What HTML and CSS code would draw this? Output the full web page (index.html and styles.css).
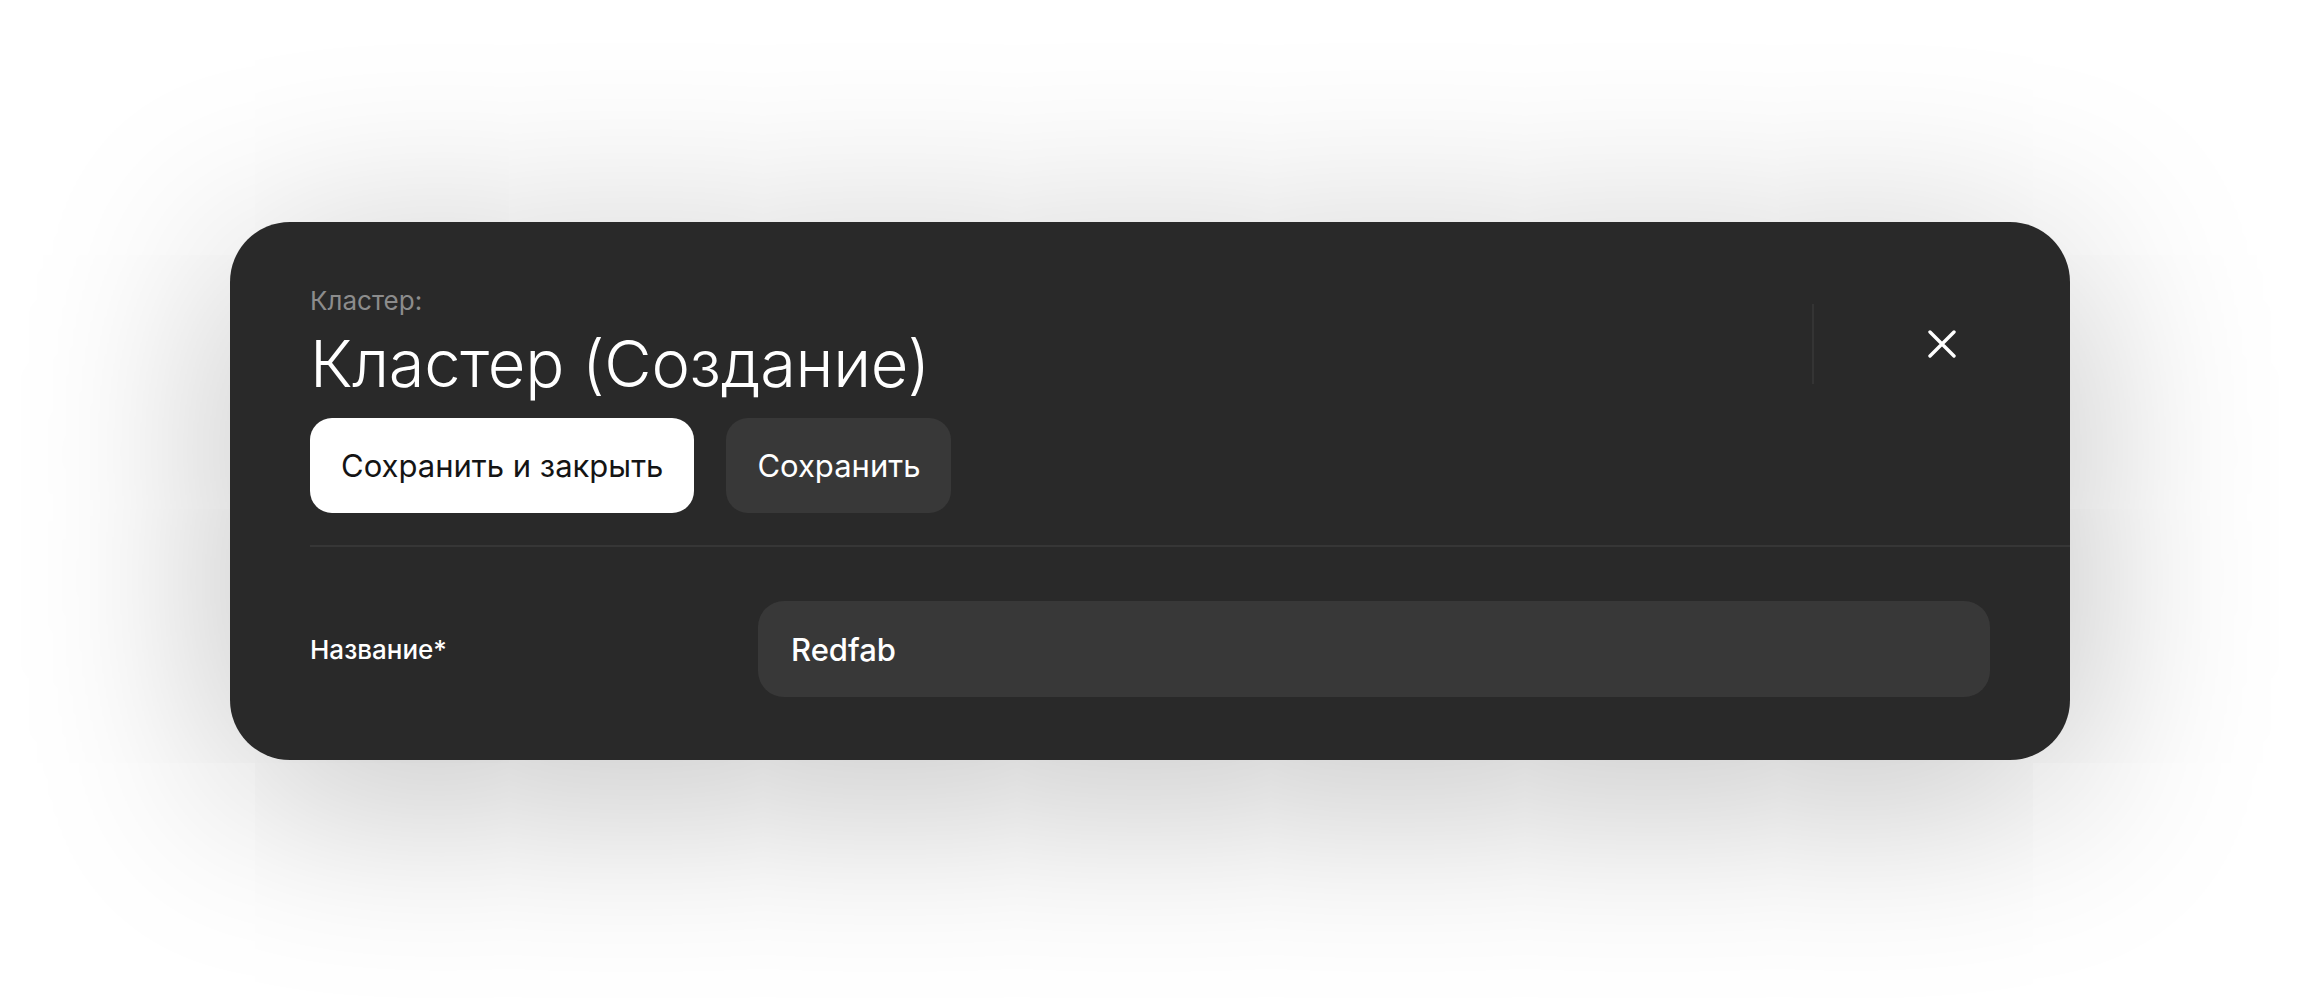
FILE: index.html
```html
<!DOCTYPE html>
<html lang="ru">
<head>
<meta charset="utf-8">
<title>Кластер (Создание)</title>
<link rel="stylesheet" href="styles.css">
</head>
<body>
<div class="page">
  <div class="card">
    <div class="header">
      <div class="header-main">
        <div class="eyebrow">Кластер:</div>
        <h1 class="title">Кластер (Создание)</h1>
        <div class="actions">
          <button class="btn btn-primary">Сохранить и закрыть</button>
          <button class="btn btn-secondary">Сохранить</button>
        </div>
      </div>
      <div class="close-area">
        <button class="close" aria-label="Закрыть">
          <svg width="28" height="28" viewBox="0 0 28 28"><path d="M2 2L26 26M26 2L2 26" stroke="#fff" stroke-width="3.4" stroke-linecap="round" fill="none"/></svg>
        </button>
      </div>
    </div>
    <div class="row">
      <label class="field-label">Название*</label>
      <div class="input">Redfab</div>
    </div>
  </div>
</div>
</body>
</html>
```

FILE: styles.css
```css
* { box-sizing: border-box; }
html, body { margin: 0; padding: 0; background: #ffffff; }
body { font-family: Inter, "Noto Sans", sans-serif; }
.page {
  width: 2300px;
  height: 998px;
  padding-top: 222px;
  display: flex;
  justify-content: center;
  align-items: flex-start;
}
.card {
  width: 1840px;
  background: #292929;
  border-radius: 60px;
  box-shadow: 0 30px 200px rgba(0, 0, 0, 0.28);
  overflow: hidden;
}
.header {
  display: flex;
  margin-left: 80px;
  border-bottom: 2px solid #363636;
  padding-bottom: 32px;
}
.header-main {
  flex: 1;
  padding-top: 65px;
}
.eyebrow {
  font-size: 26px;
  line-height: 28px;
  color: #8c8c8c;
  font-weight: 400;
}
.title {
  margin: 12px 0 0;
  font-size: 65px;
  line-height: 74px;
  font-weight: 300;
  color: #ffffff;
  letter-spacing: -0.3px;
}
.actions {
  display: flex;
  gap: 32px;
  margin-top: 17px;
}
.btn {
  height: 95px;
  border: none;
  border-radius: 22px;
  font-family: Inter, "Noto Sans", sans-serif;
  font-size: 31px;
  font-weight: 400;
  padding: 0 31px;
}
.btn-primary { background: #ffffff; color: #141414; }
.btn-secondary { background: #383838; color: #ffffff; }
.close-area {
  width: 258px;
  height: 80px;
  margin-top: 82px;
  border-left: 2px solid #343434;
  display: flex;
  align-items: center;
  justify-content: center;
}
.close {
  background: none;
  border: none;
  padding: 0;
  width: 28px;
  height: 28px;
  display: flex;
}
.row {
  display: flex;
  align-items: center;
  padding: 54px 80px 63px 80px;
}
.field-label {
  width: 448px;
  font-size: 26px;
  font-weight: 500;
  color: #ffffff;
}
.input {
  flex: 1;
  height: 96px;
  border-radius: 26px;
  background: #383838;
  color: #ffffff;
  font-size: 31px;
  font-weight: 500;
  padding-left: 33px;
  display: flex;
  align-items: center;
}
```
